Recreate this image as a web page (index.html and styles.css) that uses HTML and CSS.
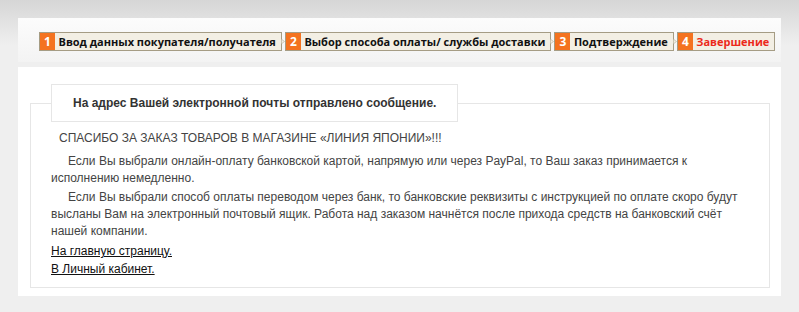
FILE: index.html
```
<!DOCTYPE html>
<html lang="ru">
<head>
<meta charset="utf-8">
<title>Завершение заказа</title>
<link rel="stylesheet" href="styles.css">
</head>
<body>
<div class="wrap">
	<div class="steps-box">
		<ul class="steps">
			<li class="step"><span class="num">1</span><span class="name">Ввод данных покупателя/получателя</span></li>
			<li class="arrow"><svg width="8" height="11" viewBox="0 0 8 11"><path d="M0.5 0.5 L7 5.5 L0.5 10.5 Z" fill="#f3efe4" stroke="#a59c84"/></svg></li>
			<li class="step"><span class="num">2</span><span class="name">Выбор способа оплаты/ службы доставки</span></li>
			<li class="arrow"><svg width="8" height="11" viewBox="0 0 8 11"><path d="M0.5 0.5 L7 5.5 L0.5 10.5 Z" fill="#f3efe4" stroke="#a59c84"/></svg></li>
			<li class="step"><span class="num">3</span><span class="name">Подтверждение</span></li>
			<li class="arrow"><svg width="8" height="11" viewBox="0 0 8 11"><path d="M0.5 0.5 L7 5.5 L0.5 10.5 Z" fill="#f3efe4" stroke="#a59c84"/></svg></li>
			<li class="step current"><span class="num">4</span><span class="name">Завершение</span></li>
		</ul>
	</div>

	<div class="main-box">
		<fieldset class="done">
			<legend>На адрес Вашей электронной почты отправлено сообщение.</legend>
			<p class="thanks">СПАСИБО ЗА ЗАКАЗ ТОВАРОВ В МАГАЗИНЕ «ЛИНИЯ ЯПОНИИ»!!!</p>
			<p class="para">Если Вы выбрали онлайн-оплату банковской картой, напрямую или через PayPal, то Ваш заказ принимается к исполнению немедленно.</p>
			<p class="para">Если Вы выбрали способ оплаты переводом через банк, то банковские реквизиты с инструкцией по оплате скоро будут высланы Вам на электронный почтовый ящик. Работа над заказом начнётся после прихода средств на банковский счёт нашей компании.</p>
			<a class="link" href="#">На главную страницу. </a>
			<a class="link" href="#">В Личный кабинет. </a>
		</fieldset>
	</div>
</div>
</body>
</html>
```

FILE: styles.css
```
*{
	margin:0;
	padding:0;
}
body{
	background:#efefef linear-gradient(#d6d6d6, #efefef 45px) no-repeat;
	font-family:"Liberation Sans", Arial, sans-serif;
	font-size:12px;
	color:#444;
	padding:18px;
	}

.wrap{
	width:763px;
	}

.steps-box{
	height:44px;
	padding:14px 0 0 21px;
	box-sizing:border-box;
	background:linear-gradient(#fcfcfc, #f3f3f3);
	}
.steps{
	display:flex;
	align-items:center;
	list-style:none;
	}
.step{
	display:flex;
	height:19px;
	box-sizing:border-box;
	border:1px solid #a59c84;
	background:#f3efe4;
	font-family:"Open Sans", sans-serif;
	font-weight:bold;
	font-size:11px;
	line-height:17px;
	color:#111;
	white-space:nowrap;
	}
.step .num{
	background:#f47320;
	color:#fff;
	width:15px;
	text-align:center;
	font-size:12px;
	}
.step .name{
	padding:0 5px 0 3.5px;
	}
.step.current .name{
	color:#ec2a1a;
	}
.arrow{
	display:flex;
	width:3px;
	position:relative;
	z-index:1;
	}
.arrow svg{
	margin-left:-1px;
	}

.main-box{
	margin-top:5px;
	background:#fff;
	padding:17px 11px 8px 12px;
	}
.done{
	border:1px solid #e6e6e6;
	padding:7px 19px 9px 20px;
	}
.done legend{
	border:1px solid #e6e6e6;
	background:#fff;
	padding:11px 21px 11px 21px;
	font-weight:bold;
	color:#333;
	line-height:14px;
	}
.thanks{
	padding-left:8px;
	line-height:18px;
	margin-bottom:6px;
	}
.para{
	text-indent:17px;
	line-height:17px;
	margin-bottom:2px;
	}
.link{
	display:block;
	width:max-content;
	color:#111;
	line-height:18px;
	}
```
